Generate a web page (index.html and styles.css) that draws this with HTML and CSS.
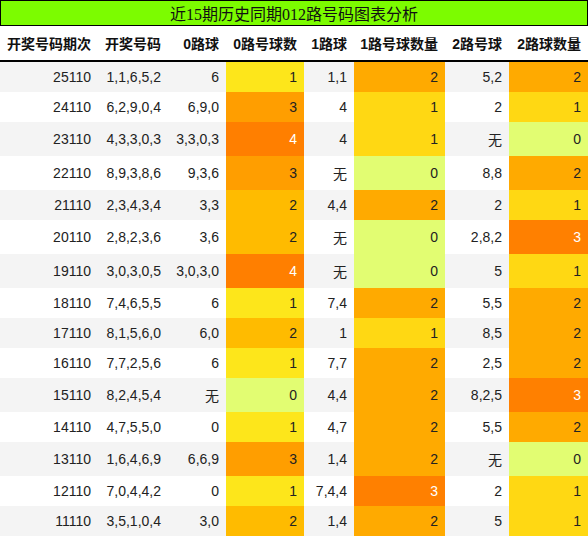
FILE: index.html
```html
<!DOCTYPE html>
<html lang="zh">
<head>
    <meta charset="UTF-8">
    <meta name="viewport" content="width=device-width, initial-scale=1.0">
    <title>近15期历史同期012路号码图表分析</title>
    <link rel="stylesheet" href="styles.css">
</head>
<body>
    <div class="title">近15期历史同期012路号码图表分析</div>
    <table class="route-table">
        <colgroup>
            <col class="c-issue">
            <col class="c-draw">
            <col class="c-r0">
            <col class="c-r0n">
            <col class="c-r1">
            <col class="c-r1n">
            <col class="c-r2">
            <col class="c-r2n">
        </colgroup>
        <thead>
            <tr>
                <th>开奖号码期次</th>
                <th>开奖号码</th>
                <th>0路球</th>
                <th>0路号球数</th>
                <th>1路球</th>
                <th>1路号球数量</th>
                <th>2路号球</th>
                <th>2路球数量</th>
            </tr>
        </thead>
        <tbody>
            <tr><td>25110</td><td>1,1,6,5,2</td><td>6</td><td class="a1">1</td><td>1,1</td><td class="b2">2</td><td>5,2</td><td class="b2">2</td></tr>
            <tr><td>24110</td><td>6,2,9,0,4</td><td>6,9,0</td><td class="a3">3</td><td>4</td><td class="b1">1</td><td>2</td><td class="b1">1</td></tr>
            <tr><td>23110</td><td>4,3,3,0,3</td><td>3,3,0,3</td><td class="a4">4</td><td>4</td><td class="b1">1</td><td>无</td><td class="b0">0</td></tr>
            <tr><td>22110</td><td>8,9,3,8,6</td><td>9,3,6</td><td class="a3">3</td><td>无</td><td class="b0">0</td><td>8,8</td><td class="b2">2</td></tr>
            <tr><td>21110</td><td>2,3,4,3,4</td><td>3,3</td><td class="a2">2</td><td>4,4</td><td class="b2">2</td><td>2</td><td class="b1">1</td></tr>
            <tr><td>20110</td><td>2,8,2,3,6</td><td>3,6</td><td class="a2">2</td><td>无</td><td class="b0">0</td><td>2,8,2</td><td class="b3">3</td></tr>
            <tr><td>19110</td><td>3,0,3,0,5</td><td>3,0,3,0</td><td class="a4">4</td><td>无</td><td class="b0">0</td><td>5</td><td class="b1">1</td></tr>
            <tr><td>18110</td><td>7,4,6,5,5</td><td>6</td><td class="a1">1</td><td>7,4</td><td class="b2">2</td><td>5,5</td><td class="b2">2</td></tr>
            <tr><td>17110</td><td>8,1,5,6,0</td><td>6,0</td><td class="a2">2</td><td>1</td><td class="b1">1</td><td>8,5</td><td class="b2">2</td></tr>
            <tr><td>16110</td><td>7,7,2,5,6</td><td>6</td><td class="a1">1</td><td>7,7</td><td class="b2">2</td><td>2,5</td><td class="b2">2</td></tr>
            <tr><td>15110</td><td>8,2,4,5,4</td><td>无</td><td class="a0">0</td><td>4,4</td><td class="b2">2</td><td>8,2,5</td><td class="b3">3</td></tr>
            <tr><td>14110</td><td>4,7,5,5,0</td><td>0</td><td class="a1">1</td><td>4,7</td><td class="b2">2</td><td>5,5</td><td class="b2">2</td></tr>
            <tr><td>13110</td><td>1,6,4,6,9</td><td>6,6,9</td><td class="a3">3</td><td>1,4</td><td class="b2">2</td><td>无</td><td class="b0">0</td></tr>
            <tr><td>12110</td><td>7,0,4,4,2</td><td>0</td><td class="a1">1</td><td>7,4,4</td><td class="b3">3</td><td>2</td><td class="b1">1</td></tr>
            <tr><td>11110</td><td>3,5,1,0,4</td><td>3,0</td><td class="a2">2</td><td>1,4</td><td class="b2">2</td><td>5</td><td class="b1">1</td></tr>
        </tbody>
    </table>
</body>
</html>
```

FILE: styles.css
```css
body {
    margin: 0;
    padding: 0;
    font-family: "Liberation Sans", "Noto Sans CJK SC", sans-serif;
    font-size: 14px;
    color: #222;
    background-color: #fff;
}
.title {
    border: 1px solid #000;
    background-color: #7cfc00;
    font-family: "Liberation Serif", "Noto Sans CJK SC", serif;
    font-size: 16px;
    text-align: center;
    color: #111;
}
.route-table {
    width: 588px;
    table-layout: fixed;
    border-collapse: separate;
    border-spacing: 0;
}
.c-issue { width: 98px; }
.c-draw { width: 70px; }
.c-r0 { width: 58px; }
.c-r0n { width: 78px; }
.c-r1 { width: 50px; }
.c-r1n { width: 91px; }
.c-r2 { width: 64px; }
.c-r2n { width: 79px; }
th, td {
    padding: 7px 7px 7px 0;
    text-align: right;
    white-space: nowrap;
}
th {
    font-weight: bold;
    color: #111;
    border-bottom: 2px solid #000;
}
tbody tr:nth-child(odd) {
    background-color: #f4f4f4;
}
/* 0路号球数: scale 0-4 */
.a0 { background-color: #e2fd72; }
.a1 { background-color: #fde61b; }
.a2 { background-color: #ffbb00; }
.a3 { background-color: #ff9e00; }
.a4 { background-color: #ff7f00; color: #fff; }
/* 1路 / 2路 数量: scale 0-3 */
.b0 { background-color: #e2fd72; }
.b1 { background-color: #ffd813; }
.b2 { background-color: #ffaa00; }
.b3 { background-color: #ff8000; color: #fff; }
```
